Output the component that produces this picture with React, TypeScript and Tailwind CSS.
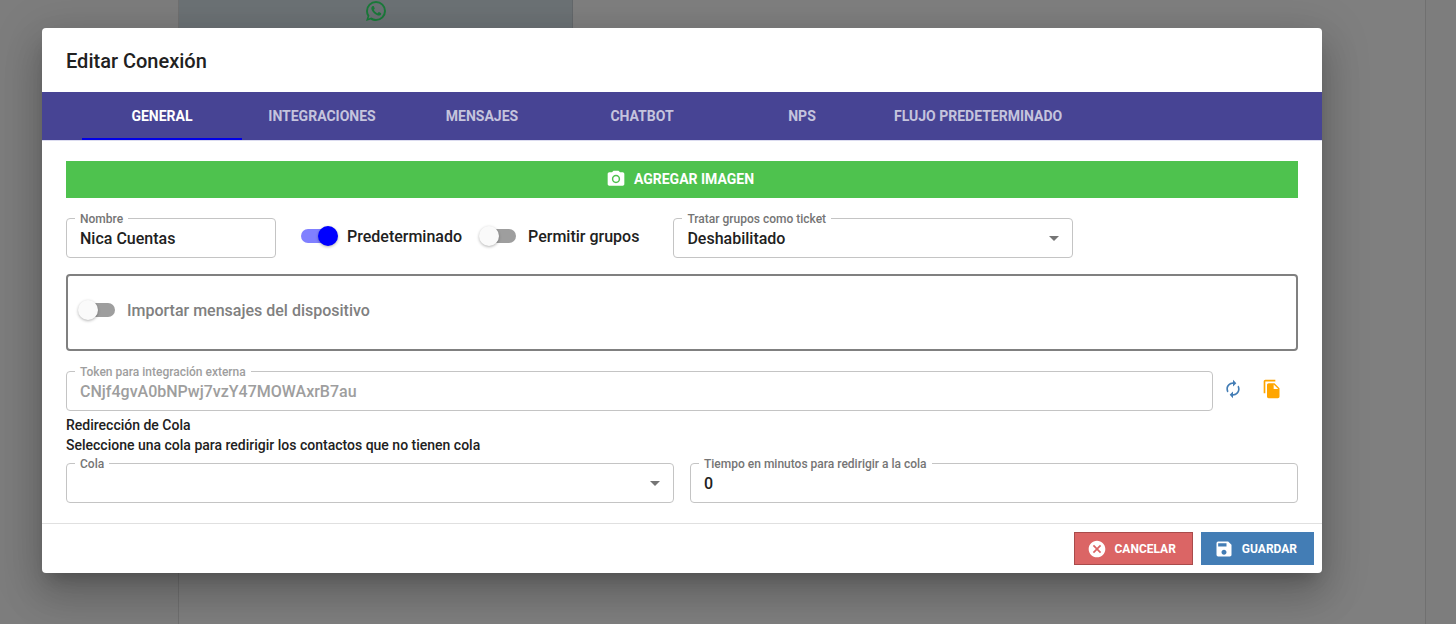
import { useState } from "react";
import type { ReactNode } from "react";
import {
  MdArrowDropDown,
  MdAutorenew,
  MdCancel,
  MdFileCopy,
  MdPhotoCamera,
  MdSave,
} from "react-icons/md";

const TABS = [
  "General",
  "Integraciones",
  "Mensajes",
  "Chatbot",
  "NPS",
  "Flujo predeterminado",
];

const CONTROL =
  "h-10 w-full rounded border border-[#c4c4c4] bg-transparent px-[13px] text-base font-medium text-[#212121] outline-none disabled:text-[#9e9e9e]";

function Field({
  id,
  label,
  muted = false,
  className = "",
  children,
}: {
  id: string;
  label: string;
  muted?: boolean;
  className?: string;
  children: ReactNode;
}) {
  return (
    <div className={`relative ${className}`}>
      <label
        htmlFor={id}
        className={`absolute -top-[7px] left-[9px] bg-white px-[5px] text-xs font-medium ${
          muted ? "text-[#9e9e9e]" : "text-[#757575]"
        }`}
      >
        {label}
      </label>
      {children}
    </div>
  );
}

function SelectField({
  id,
  label,
  className,
  options,
}: {
  id: string;
  label: string;
  className?: string;
  options: string[];
}) {
  return (
    <Field id={id} label={label} className={className}>
      <select id={id} className={`${CONTROL} appearance-none pt-[2px]`}>
        {options.map((option) => (
          <option key={option}>{option}</option>
        ))}
      </select>
      <MdArrowDropDown className="pointer-events-none absolute top-2 right-[7px] size-6 text-[#757575]" />
    </Field>
  );
}

function Toggle({ label, on = false }: { label: string; on?: boolean }) {
  return (
    <label className="flex items-center gap-3 whitespace-nowrap">
      <input
        type="checkbox"
        role="switch"
        defaultChecked={on}
        className="relative h-[14px] w-[34px] shrink-0 appearance-none rounded-full bg-[#9e9e9e] before:absolute before:-top-[3px] before:-left-[3px] before:size-5 before:rounded-full before:bg-[#fafafa] before:shadow-[0_1px_3px_rgba(0,0,0,0.3)] checked:bg-[#8080ff] checked:before:left-[17px] checked:before:bg-[#0000ff]"
      />
      <span className="pt-[2px]">{label}</span>
    </label>
  );
}

function WhatsAppIcon() {
  return (
    <svg viewBox="0 0 24 24" className="size-6 shrink-0 fill-[#34f474]">
      <path d="M16.75 13.96c.25.13.41.2.46.3.06.11.04.61-.21 1.18-.2.56-1.24 1.1-1.7 1.12-.46.02-.47.36-2.96-.73-2.49-1.09-3.99-3.75-4.11-3.92-.12-.17-.96-1.38-.92-2.61.05-1.22.69-1.8.95-2.04.24-.26.51-.29.68-.26h.47c.15 0 .36-.06.55.45l.69 1.87c.06.13.1.28.01.44l-.27.41-.39.42c-.12.12-.26.25-.12.5.12.26.62 1.09 1.32 1.78.91.88 1.71 1.17 1.95 1.3.24.14.39.12.54-.04l.81-.94c.19-.25.35-.19.58-.11l1.67.88M12 2a10 10 0 0 1 10 10 10 10 0 0 1-10 10c-1.97 0-3.8-.57-5.35-1.55L2 22l1.55-4.65A9.969 9.969 0 0 1 2 12 10 10 0 0 1 12 2m0 2a8 8 0 0 0-8 8c0 1.72.54 3.31 1.46 4.61L4.5 19.5l2.89-.96A7.95 7.95 0 0 0 12 20a8 8 0 0 0 8-8 8 8 0 0 0-8-8z" />
    </svg>
  );
}

export default function App() {
  const [tab, setTab] = useState(0);

  return (
    <div className="relative min-h-screen bg-[#fafafa] font-[Roboto,sans-serif] font-medium text-[#212121]">
      <div className="flex min-h-screen pr-[30px] pl-[178px]">
        <div className="flex-1 border-x border-[#e0e0e0] bg-white">
          <div className="flex h-[52px] w-[394px] items-start justify-center border-r border-[#c8d0d6] bg-[#d8e4ea]">
            <div className="flex h-[22px] items-center">
              <WhatsAppIcon />
            </div>
          </div>
        </div>
      </div>

      <div className="absolute inset-0 bg-black/50 pt-7 pr-[134px] pl-[42px]">
        <div
          role="dialog"
          aria-labelledby="dialog-title"
          className="rounded bg-white shadow-[0_11px_15px_-7px_rgba(0,0,0,0.2),0_24px_38px_3px_rgba(0,0,0,0.14),0_9px_46px_8px_rgba(0,0,0,0.12)]"
        >
          <h2 id="dialog-title" className="px-6 pt-[17px] pb-[15px] text-xl leading-8">
            Editar Conexión
          </h2>

          <div
            role="tablist"
            className="flex border-b border-[#dcdcf0] bg-[#474494] bg-clip-padding px-10"
          >
            {TABS.map((name, i) => (
              <button
                key={name}
                role="tab"
                aria-selected={tab === i}
                onClick={() => setTab(i)}
                className={`h-12 min-w-40 border-b-2 px-3 pt-[2px] text-sm font-bold whitespace-nowrap uppercase ${
                  tab === i
                    ? "border-[#0000e6] text-white"
                    : "border-transparent text-white/70"
                }`}
              >
                {name}
              </button>
            ))}
          </div>

          <div className="px-6 py-5">
            <button className="flex h-[37px] w-full items-center justify-center gap-2 bg-[#4ec24e] pr-1 pb-px text-sm font-bold text-white uppercase">
              <MdPhotoCamera className="size-5" />
              Agregar imagen
            </button>

            <div className="mt-5 flex items-start">
              <Field id="name" label="Nombre" className="w-[210px]">
                <input id="name" defaultValue="Nica Cuentas" className={CONTROL} />
              </Field>
              <div className="mr-[34px] ml-[25px] flex h-9 items-center gap-5">
                <Toggle label="Predeterminado" on />
                <Toggle label="Permitir grupos" />
              </div>
              <SelectField
                id="groups"
                label="Tratar grupos como ticket"
                className="w-[400px]"
                options={["Deshabilitado", "Habilitado"]}
              />
            </div>

            <div className="mt-4 flex h-[77px] items-start rounded border-2 border-[#808080] pt-[21px] pl-[13px] text-[#808080]">
              <Toggle label="Importar mensajes del dispositivo" />
            </div>

            <div className="mt-5 flex items-start">
              <Field
                id="token"
                label="Token para integración externa"
                muted
                className="flex-1"
              >
                <input
                  id="token"
                  disabled
                  defaultValue="CNjf4gvA0bNPwj7vzY47MOWAxrB7au"
                  className={CONTROL}
                />
              </Field>
              <div className="mr-[7px] flex">
                <button
                  aria-label="Regenerar token"
                  className="flex h-9 w-[39px] items-center justify-center text-[#437db5]"
                >
                  <MdAutorenew className="size-5" />
                </button>
                <button
                  aria-label="Copiar token"
                  className="flex h-9 w-[39px] items-center justify-center text-[#ffa500]"
                >
                  <MdFileCopy className="size-5" />
                </button>
              </div>
            </div>

            <div className="mt-1 text-sm">
              <h3>Redirección de Cola</h3>
              <p>Seleccione una cola para redirigir los contactos que no tienen cola</p>
            </div>

            <div className="mt-2 grid grid-cols-2 gap-4">
              <SelectField id="queue" label="Cola" options={[""]} />
              <Field id="minutes" label="Tiempo en minutos para redirigir a la cola">
                <input id="minutes" defaultValue="0" className={CONTROL} />
              </Field>
            </div>
          </div>

          <div className="flex justify-end gap-2 border-t border-[#e0e0e0] p-2 text-xs font-bold text-white">
            <button className="flex h-[33px] items-center gap-2 border border-[#a94b4b] bg-[#db6565] pr-4 pl-3 uppercase">
              <MdCancel className="size-5" />
              Cancelar
            </button>
            <button className="flex h-[33px] items-center gap-2 border border-[#437db5] bg-[#437db5] pr-4 pl-3 uppercase">
              <MdSave className="size-5" />
              Guardar
            </button>
          </div>
        </div>
      </div>
    </div>
  );
}
